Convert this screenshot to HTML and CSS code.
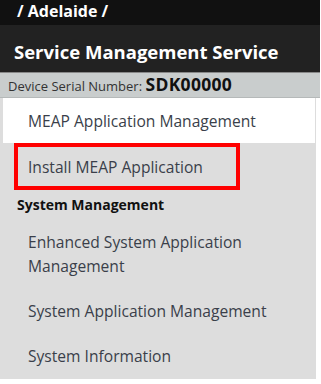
FILE: index.html
```html
<!DOCTYPE html>
<html lang="en">
<head>
<meta charset="utf-8">
<title>Service Management Service</title>
<link rel="stylesheet" href="styles.css">
</head>
<body>
<div class="wrap">
	<div class="crumb">/ Adelaide /</div>
	<h1 class="title">Service Management Service</h1>
	<div class="serial">Device Serial Number: <strong>SDK00000</strong></div>
	<div class="side">
		<ul class="menu">
			<li class="menu-item is-selected"><a href="#none">MEAP Application Management</a></li>
			<li class="menu-item is-marked"><a href="#none">Install MEAP Application</a></li>
		</ul>
		<h2 class="menu-title">System Management</h2>
		<ul class="menu">
			<li class="menu-item"><a href="#none">Enhanced System Application Management</a></li>
			<li class="menu-item"><a href="#none">System Application Management</a></li>
			<li class="menu-item"><a href="#none">System Information</a></li>
		</ul>
	</div>
</div>
</body>
</html>
```

FILE: styles.css
```css
* {
	margin: 0;
	padding: 0;
}
body {
	font-family: "Open Sans", "Noto Sans", sans-serif;
	background: #fff;
}
a {
	color: #3a3f4a;
	text-decoration: none;
}
ul, li {
	list-style: none;
}
.wrap {
	width: 320px;
}
.crumb {
	height: 25px;
	padding-left: 17px;
	background: #111;
	color: #fff;
	font-size: 16px;
	font-weight: bold;
	line-height: 23px;
}
.title {
	height: 44px;
	padding: 3px 0 0 14px;
	background: #222;
	color: #fff;
	font-size: 18.5px;
	font-weight: bold;
	line-height: 48px;
	border-bottom: 1px solid #888;
}
.serial {
	height: 24px;
	padding-left: 8px;
	background: #c9cdcd;
	border-bottom: 1px solid #b5b9b9;
	color: #333;
	font-size: 13px;
	line-height: 22px;
	white-space: nowrap;
}
.serial strong {
	font-size: 17.5px;
	letter-spacing: 0.3px;
	color: #111;
}
.side {
	width: 316px;
	height: 281px;
	background: #ddd;
}
.menu-item a {
	display: block;
	padding: 11px 0 10px 28px;
	font-size: 15.6px;
	line-height: 24px;
}
.menu-item.is-selected {
	margin: 0 1px 0 3px;
	background: #fff;
}
.menu-item.is-selected a {
	padding: 11px 0 10px 25px;
}
.menu-item.is-marked {
	width: 218px;
	margin: 0 0 0 14px;
	border: 4px solid #f00;
}
.menu-item.is-marked a {
	padding: 8px 0 7px 10px;
}
.menu-title {
	padding: 5px 0 4px 17px;
	font-size: 14px;
	font-weight: bold;
	line-height: 20px;
	color: #111;
}
```
